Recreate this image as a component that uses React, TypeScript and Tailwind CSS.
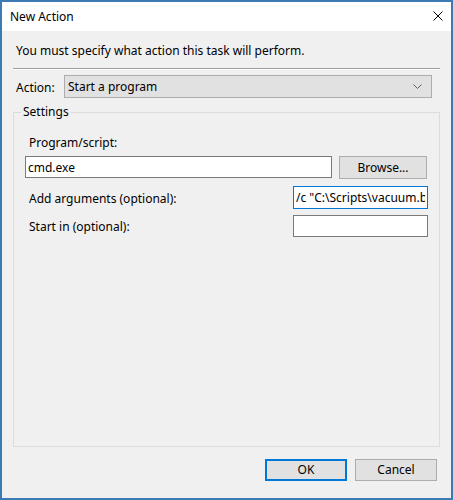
import React from 'react';

const font = "font-['Segoe_UI','Noto_Sans',sans-serif]";

function Field({ value, focused, className }: { value?: string; focused?: boolean; className: string }) {
  return (
    <input
      readOnly
      value={value ?? ''}
      className={
        'bg-white border outline-none px-[2px] text-[12px] leading-[16px] ' +
        (focused ? 'border-[#0078d7] ' : 'border-[#7a7a7a] ') +
        className
      }
    />
  );
}

function Button({ label, primary, className }: { label: string; primary?: boolean; className: string }) {
  return (
    <button
      className={
        'bg-[#e1e1e1] flex items-center justify-center leading-none ' +
        (primary ? 'border-2 border-[#0078d7] ' : 'border border-[#adadad] ') +
        className
      }
    >
      {label}
    </button>
  );
}

export default function App() {
  return (
    <div className={`w-[453px] h-[500px] border-2 border-[#3c7ab4] flex flex-col bg-[#f0f0f0] text-[12px] text-black ${font}`}>
      {/* title bar */}
      <div className="h-[29px] bg-white flex items-center justify-between pl-[8px] pr-[8px]">
        <span className="leading-[16px]">New Action</span>
        <svg width="10" height="10" viewBox="0 0 10 10" className="mb-[1px]">
          <path d="M0.5 0.5 L9.5 9.5 M9.5 0.5 L0.5 9.5" stroke="#000" strokeWidth="1" />
        </svg>
      </div>

      <div className="flex-1 flex flex-col px-[11px]">
        <p className="mt-[12px] pl-[3px] leading-[16px]">You must specify what action this task will perform.</p>
        <div className="mt-[9px] border-t border-t-[#a0a0a0] border-b border-b-white" />

        {/* action combo */}
        <div className="mt-[5px] flex items-center">
          <span className="w-[51px] pl-[3px] leading-[16px] pt-[2px]">Action:</span>
          <div className="w-[368px] h-[23px] bg-[#e1e1e1] border border-[#adadad] flex items-center justify-between pl-[3px] pr-[9px]">
            <span className="leading-[16px]">Start a program</span>
            <svg width="9" height="5" viewBox="0 0 9 5">
              <path d="M0.5 0.5 L4.5 4.5 L8.5 0.5" stroke="#606060" strokeWidth="1" fill="none" />
            </svg>
          </div>
        </div>

        {/* settings group */}
        <div className="relative mt-[14px] flex-1 border border-[#dcdcdc] pt-[22px] pl-[11px]">
          <span className="absolute -top-[9px] left-[7px] px-[2px] bg-[#f0f0f0] leading-[16px]">Settings</span>
          <div className="pl-[4px] leading-[16px]">Program/script:</div>
          <div className="mt-[5px] flex items-start">
            <Field value="cmd.exe" className="w-[307px] h-[22px]" />
            <Button label="Browse..." className="ml-[7px] w-[88px] h-[23px]" />
          </div>
          <div className="mt-[7px] flex items-center">
            <span className="w-[268px] pl-[4px] leading-[16px] pt-[2px]">Add arguments (optional):</span>
            <Field value={'/c "C:\\Scripts\\vacuum.bat"'} focused className="w-[135px] h-[23px]" />
          </div>
          <div className="mt-[6px] flex items-center">
            <span className="w-[268px] pl-[4px] leading-[16px] pt-[2px]">Start in (optional):</span>
            <Field className="w-[135px] h-[22px]" />
          </div>
        </div>

        {/* buttons */}
        <div className="mt-[12px] mb-[17px] flex justify-end gap-[8px] pr-[3px]">
          <Button label="OK" primary className="w-[82px] h-[22px]" />
          <Button label="Cancel" className="w-[82px] h-[22px]" />
        </div>
      </div>
    </div>
  );
}
